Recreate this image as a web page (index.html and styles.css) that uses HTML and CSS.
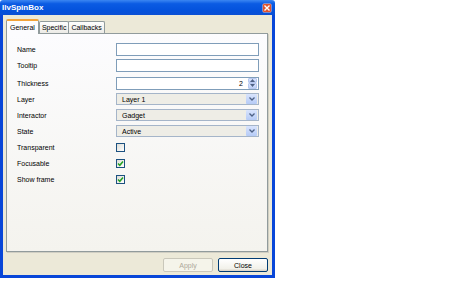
FILE: index.html
```html
<!DOCTYPE html>
<html lang="en">
<head>
  <meta charset="UTF-8" />
  <title>IlvSpinBox</title>
  <link rel="stylesheet" href="styles.css">
</head>
<body>
  <div class="window">
    <div class="titlebar">
      <span class="title">IlvSpinBox</span>
      <span class="close-btn">
        <svg width="6" height="6" viewBox="0 0 6 6"><path d="M0.5 0.5L5.5 5.5M5.5 0.5L0.5 5.5" stroke="#fff" stroke-width="1.4"/></svg>
      </span>
    </div>

    <div class="frame">
      <div class="tabs">
        <div class="tab active">General</div>
        <div class="tab">Specific</div>
        <div class="tab">Callbacks</div>
      </div>

      <div class="panel">
        <div class="row">
          <span class="label">Name</span>
          <div class="field text"></div>
        </div>
        <div class="row">
          <span class="label">Tooltip</span>
          <div class="field text"></div>
        </div>
        <div class="row spaced">
          <span class="label">Thickness</span>
          <div class="field text spin">
            <span class="value">2</span>
            <span class="spin-btns">
              <span class="spin-half"><svg width="5" height="3" viewBox="0 0 5 3"><path d="M0 3L2.5 0L5 3Z" fill="#4d6185"/></svg></span>
              <span class="spin-half"><svg width="5" height="3" viewBox="0 0 5 3"><path d="M0 0L2.5 3L5 0Z" fill="#4d6185"/></svg></span>
            </span>
          </div>
        </div>
        <div class="row">
          <span class="label">Layer</span>
          <div class="field combo">
            <span class="value">Layer 1</span>
            <span class="drop"><svg width="6" height="4" viewBox="0 0 6 4"><path d="M0.5 0.5L3 3L5.5 0.5" fill="none" stroke="#4d6185" stroke-width="1.3"/></svg></span>
          </div>
        </div>
        <div class="row">
          <span class="label">Interactor</span>
          <div class="field combo">
            <span class="value">Gadget</span>
            <span class="drop"><svg width="6" height="4" viewBox="0 0 6 4"><path d="M0.5 0.5L3 3L5.5 0.5" fill="none" stroke="#4d6185" stroke-width="1.3"/></svg></span>
          </div>
        </div>
        <div class="row">
          <span class="label">State</span>
          <div class="field combo">
            <span class="value">Active</span>
            <span class="drop"><svg width="6" height="4" viewBox="0 0 6 4"><path d="M0.5 0.5L3 3L5.5 0.5" fill="none" stroke="#4d6185" stroke-width="1.3"/></svg></span>
          </div>
        </div>
        <div class="row">
          <span class="label">Transparent</span>
          <span class="check"></span>
        </div>
        <div class="row">
          <span class="label">Focusable</span>
          <span class="check"><svg width="7" height="7" viewBox="0 0 7 7"><path d="M1 3.5L2.8 5.3L6 1.5" fill="none" stroke="#21a121" stroke-width="1.5"/></svg></span>
        </div>
        <div class="row">
          <span class="label">Show frame</span>
          <span class="check"><svg width="7" height="7" viewBox="0 0 7 7"><path d="M1 3.5L2.8 5.3L6 1.5" fill="none" stroke="#21a121" stroke-width="1.5"/></svg></span>
        </div>
      </div>

      <div class="footer">
        <button class="btn disabled">Apply</button>
        <button class="btn">Close</button>
      </div>
    </div>
  </div>
</body>
</html>
```

FILE: styles.css
```css
body {
  margin: 0;
  background: #fff;
  font-family: 'Liberation Sans', Arial, sans-serif;
  font-size: 7px;
  color: #000;
}

.window {
  width: 275px;
  height: 278px;
  display: flex;
  flex-direction: column;
}

.titlebar {
  height: 15px;
  display: flex;
  align-items: center;
  justify-content: space-between;
  padding: 0 4px 0 2px;
  background: linear-gradient(#3b86f2 0%, #0b5be3 25%, #0452dc 70%, #0a4fd4 100%);
  border-radius: 3px 3px 0 0;
}

.title {
  color: #fff;
  font-weight: bold;
  font-size: 8px;
}

.close-btn {
  width: 8px;
  height: 8px;
  display: flex;
  align-items: center;
  justify-content: center;
  background: #e0532f;
  box-shadow: 0 0 0 0.5px #f3c3b3;
  border-radius: 1px;
}

.frame {
  flex: 1;
  display: flex;
  flex-direction: column;
  padding: 4px 4px 3px 3px;
  background: #ece9d8;
  border: 3px solid #0846d8;
  border-top: 0;
}

.tabs {
  display: flex;
  height: 14px;
  align-items: flex-end;
}

.tab {
  height: 12px;
  padding: 0 2px;
  display: flex;
  align-items: center;
  background: linear-gradient(#fefefe, #ecebe6);
  border: 1px solid #919b9c;
  border-bottom: 0;
  border-radius: 2px 2px 0 0;
  box-sizing: border-box;
  margin-left: -1px;
}

.tab:first-child {
  margin-left: 0;
}

.tab.active {
  height: 15px;
  margin-bottom: -1px;
  padding: 0 3px;
  background: #fcfcfe;
  border-top: 2px solid #f2a33a;
  position: relative;
  z-index: 1;
  margin-right: 1px;
}

.panel {
  flex: 1;
  border: 1px solid #919b9c;
  background: linear-gradient(#fcfcfe, #f4f3ee);
  padding: 7.5px 8px 0 10px;
  box-shadow: 1px 1px 0 #d0cec3;
}

.row {
  display: grid;
  grid-template-columns: 99px 143px;
  align-items: center;
  height: 16px;
}

.row.spaced {
  margin-top: 1.5px;
}

.field {
  height: 13px;
  box-sizing: border-box;
  display: flex;
  align-items: center;
}

.text {
  background: #fff;
  border: 1px solid #7f9db9;
}

.spin {
  justify-content: flex-end;
  padding-right: 1px;
}

.spin .value {
  margin-right: 5px;
}

.spin-btns {
  width: 9px;
  height: 11px;
  display: flex;
  flex-direction: column;
}

.spin-half {
  flex: 1;
  display: flex;
  align-items: center;
  justify-content: center;
  background: linear-gradient(#dbe6fd, #bccff7);
  border: 0.5px solid #b7c8ef;
  border-radius: 1px;
}

.combo {
  height: 12px;
  background: #eeede6;
  border: 1px solid #a5b5c9;
  justify-content: space-between;
  padding: 0 1px 0 5px;
}

.drop {
  width: 11px;
  height: 10px;
  display: flex;
  align-items: center;
  justify-content: center;
  background: linear-gradient(#d8e4fd, #b5cbf6);
  border-radius: 1px;
}

.check {
  width: 9px;
  height: 9px;
  box-sizing: border-box;
  border: 1px solid #1c5180;
  background: linear-gradient(135deg, #dcdcd6, #fff);
  display: flex;
  align-items: center;
  justify-content: center;
}

.footer {
  display: flex;
  justify-content: flex-end;
  gap: 5px;
  margin-top: 6px;
}

.btn {
  width: 50px;
  height: 14px;
  padding: 0;
  font-family: 'Liberation Sans', Arial, sans-serif;
  font-size: 7px;
  color: #000;
  background: linear-gradient(#fff, #f2f1ea 80%, #d6d0c5);
  border: 1px solid #003c74;
  border-radius: 2px;
}

.btn.disabled {
  color: #aca899;
  background: #f5f4ea;
  border-color: #c9c7ba;
}
```
